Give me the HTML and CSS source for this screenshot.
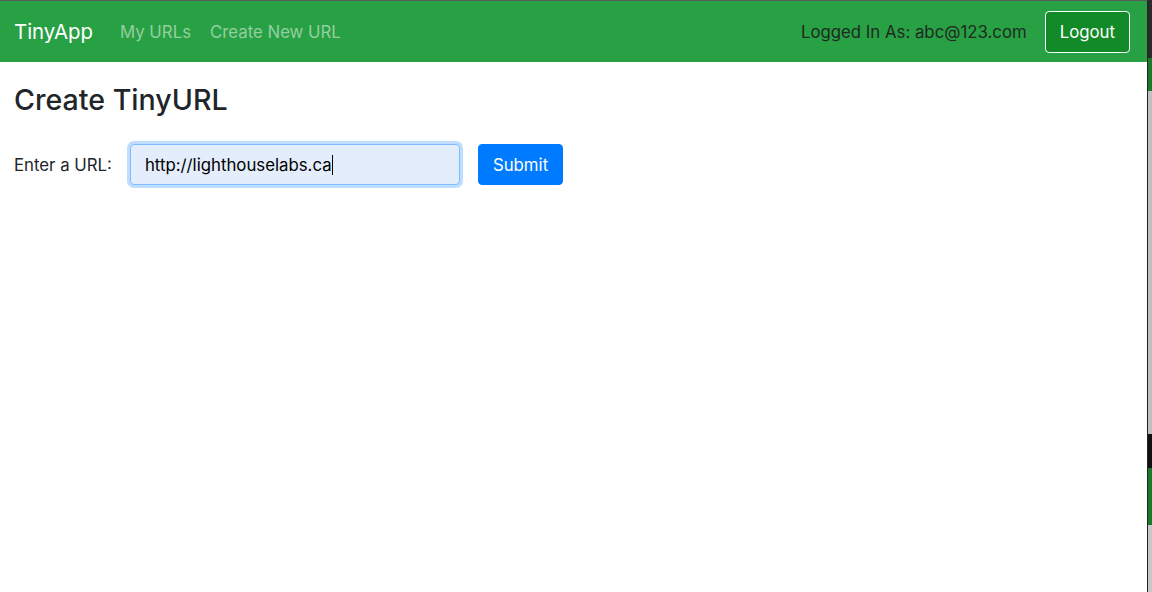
FILE: index.html
```html
<!DOCTYPE html>
<html>
<head>
<meta charset="utf-8">
<link rel="stylesheet" href="styles.css">
<title>TinyApp</title>
</head>
<body>
<div class="window">
  <div class="page">
    <nav class="navbar">
      <a class="brand" href="#">TinyApp</a>
      <div class="nav-links">
        <a class="nav-link" href="#">My URLs</a>
        <a class="nav-link" href="#">Create New URL</a>
      </div>
      <div class="nav-right">
        <span class="logged">Logged In As: abc@123.com</span>
        <button class="btn-logout">Logout</button>
      </div>
    </nav>
    <main class="content">
      <h3 class="title">Create TinyURL</h3>
      <form class="url-form">
        <label class="label">Enter a URL:</label>
        <div class="input">http://lighthouselabs.ca<span class="caret"></span></div>
        <button class="btn-submit" type="button">Submit</button>
      </form>
    </main>
  </div>
  <div class="side-strip">
    <div class="seg s1"></div>
    <div class="seg s2"></div>
    <div class="seg s3"></div>
    <div class="seg s4"></div>
    <div class="seg s5"></div>
    <div class="seg s6"></div>
  </div>
</div>
</body>
</html>
```
FILE: styles.css
```css
* { box-sizing: border-box; }
html, body { margin: 0; padding: 0; height: 100%; }
body {
  font-family: Inter, "Noto Sans", "Liberation Sans", sans-serif;
  color: #212529;
  background: #fff;
  overflow: hidden;
}
.window {
  display: flex;
  width: 1152px;
  height: 592px;
}
.page {
  width: 1148px;
  height: 592px;
  background: #fff;
  border-right: 1px solid #222;
  border-top: 1px solid #5a5a5a;
}
.navbar {
  height: 61px;
  background: #28a044;
  display: flex;
  align-items: center;
  padding: 0 17px 0 14px;
}
.brand {
  color: #fff;
  text-decoration: none;
  font-size: 20.4px;
  margin-right: 27px;
}
.nav-links { display: flex; gap: 19px; }
.nav-link {
  color: rgba(255,255,255,0.5);
  text-decoration: none;
  font-size: 16.8px;
}
.nav-right {
  margin-left: auto;
  display: flex;
  align-items: center;
  gap: 18px;
}
.logged {
  font-size: 16.8px;
  color: #1f2a22;
}
.btn-logout {
  font-family: inherit;
  font-size: 16.8px;
  color: #fff;
  background: #138a28;
  border: 1px solid #fff;
  border-radius: 4px;
  height: 42px;
  padding: 0 14px;
}
.content { padding: 20px 14px; }
.title {
  margin: 0 0 26px 0;
  font-size: 28.6px;
  font-weight: 500;
  line-height: 36px;
}
.url-form {
  display: flex;
  align-items: center;
}
.label {
  font-size: 16.8px;
  margin-right: 18px;
}
.input {
  width: 330px;
  height: 41px;
  border: 1px solid #80bdff;
  border-radius: 4px;
  background: #e4edfb;
  box-shadow: 0 0 0 3px rgba(0,123,255,0.25);
  display: flex;
  align-items: center;
  padding: 0 14px;
  font-size: 16.8px;
  color: #000;
  margin-right: 18px;
}
.caret {
  display: inline-block;
  width: 1px;
  height: 20px;
  background: #000;
}
.btn-submit {
  font-family: inherit;
  font-size: 16.8px;
  color: #fff;
  background: #007bff;
  border: 1px solid #007bff;
  border-radius: 4px;
  height: 41px;
  padding: 0 14px;
}
.side-strip {
  width: 4px;
  height: 592px;
  background: #bcbcbc;
  display: flex;
  flex-direction: column;
}
.seg { width: 100%; }
.s1 { height: 58px; background: #2b2b2b; }
.s2 { height: 33px; background: #1a7a2c; }
.s3 { height: 343px; background: #c0c0c0; }
.s4 { height: 34px; background: #111; }
.s5 { height: 57px; background: #1a7a2c; }
.s6 { flex: 1; background: #c8c8c8; }
```
